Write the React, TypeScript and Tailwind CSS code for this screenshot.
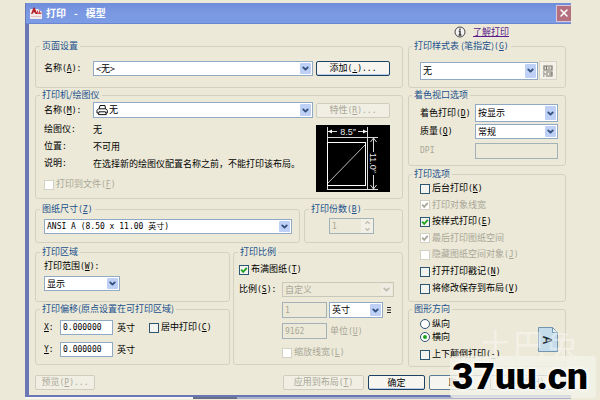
import React from "react";
import { ChevronDown, ChevronUp, X } from "lucide-react";

type Kids = { children?: React.ReactNode };

const MONO = "font-['DejaVu_Sans_Mono','Noto_Sans_CJK_SC',monospace] text-[8px]";

/** Caption followed by its keyboard mnemonic, e.g. 名称(A): */
function Cap({ t, k, end = "" }: { t: string; k?: string; end?: string }) {
  return (
    <>
      {t}
      {(k || end) && (
        <span className={MONO}>
          {k && (
            <>
              (<u>{k}</u>)
            </>
          )}
          {end}
        </span>
      )}
    </>
  );
}

const PADS = {
  normal: { box: "pl-2", legend: "-ml-1" },
  wide: { box: "pl-[11px]", legend: "-ml-2" },
  tight: { box: "pl-[5px]", legend: "-ml-px" },
};

function Group({ title, pad = "normal", className = "", children }: {
  title: React.ReactNode; pad?: keyof typeof PADS; className?: string;
} & Kids) {
  return (
    <fieldset className={`min-w-0 rounded-[3px] border border-[#d3d1c0] ${PADS[pad].box} ${className}`}>
      <legend className={`h-3 px-0.5 leading-3 text-[#21508c] ${PADS[pad].legend}`}>{title}</legend>
      {children}
    </fieldset>
  );
}

function Select({ id, value, label, disabled, className = "", icon }: {
  id: string; value: string; label?: string; disabled?: boolean; className?: string; icon?: React.ReactNode;
}) {
  return (
    <div className={`relative shrink-0 ${className}`}>
      <select
        id={id}
        aria-label={label}
        disabled={disabled}
        className={`block h-full w-full appearance-none border pr-3 leading-3 outline-none ${icon ? "pl-[15px]" : "pl-0.5"} ${
          disabled ? "border-[#c9c7ba] bg-[#ece9d8] text-[#a9a797] opacity-100" : "border-[#90a9c4] bg-white text-black"
        }`}
      >
        <option>{value}</option>
      </select>
      {icon}
      <span
        className={`pointer-events-none absolute inset-y-0.5 right-0.5 flex w-[11px] items-center justify-center rounded-[1px] ${
          disabled ? "bg-[#efede3] text-[#c0beb0]" : "bg-[#bfd0f6] text-[#34507e]"
        }`}
      >
        <ChevronDown size={9} strokeWidth={5} />
      </span>
    </div>
  );
}

function Check({ t, k, checked, disabled }: { t: string; k?: string; checked?: boolean; disabled?: boolean }) {
  return (
    <label className={`flex items-center gap-0.5 whitespace-nowrap ${disabled ? "text-[#a9a797]" : "text-black"}`}>
      <span className="relative size-2.5 shrink-0">
        <input
          type="checkbox"
          defaultChecked={checked}
          disabled={disabled}
          className={`block size-2.5 appearance-none border ${
            disabled ? "border-[#d3d1c3] bg-white" : "border-[#2d5673] bg-[#f3f4ef]"
          }`}
        />
        {checked && (
          <svg viewBox="0 0 10 10" className="pointer-events-none absolute inset-0" fill="none"
            stroke={disabled ? "#aaa899" : "#21a121"} strokeWidth="1.8">
            <path d="M2.2 4.6 4.2 6.8 7.8 2.8" />
          </svg>
        )}
      </span>
      <span><Cap t={t} k={k} /></span>
    </label>
  );
}

function Radio({ t, checked }: { t: string; checked?: boolean }) {
  return (
    <label className="flex h-[13px] items-center gap-0.5">
      <span className="relative size-2.5">
        <input type="radio" name="orientation" defaultChecked={checked}
          className="block size-2.5 appearance-none rounded-full border border-[#2d5673] bg-white" />
        {checked && <span className="pointer-events-none absolute inset-[3px] rounded-full bg-[#21a121]" />}
      </span>
      {t}
    </label>
  );
}

function TextBox({ id, value, label, disabled, className = "" }: {
  id: string; value: string; label?: string; disabled?: boolean; className?: string;
}) {
  return (
    <input
      id={id}
      aria-label={label}
      defaultValue={value}
      disabled={disabled}
      className={`block shrink-0 border pl-0.5 leading-3 outline-none ${MONO} ${
        disabled ? "border-[#a3b2b8] bg-[#ece9d8] text-[#a9a797]" : "border-[#90a9c4] bg-white text-black"
      } ${className}`}
    />
  );
}

function Button({ children, disabled, primary, className = "" }: { disabled?: boolean; primary?: boolean; className?: string } & Kids) {
  return (
    <button
      disabled={disabled}
      className={`h-[15px] shrink-0 whitespace-nowrap rounded-[2px] border text-center leading-3 ${
        disabled
          ? "border-[#cfcdbf] bg-[#f1efe4] text-[#a9a797]"
          : primary
            ? "border-[#1d4263] bg-[#f6f5f0] text-black shadow-[inset_0_-1px_0_#b9cbe6]"
            : "border-[#5b7a94] bg-[#f6f5f0] text-black"
      } ${className}`}
    >
      {children}
    </button>
  );
}

function PlotPreview() {
  return (
    <svg viewBox="0 0 74 67" className="mt-[7px] h-[67px] w-[74px] shrink-0 bg-black" fill="none" stroke="#d8d8d8">
      <rect x="11.5" y="12.5" width="40" height="52" />
      <rect x="11.5" y="17.5" width="38" height="43" stroke="#fff" />
      <path d="M12 58 49 20" stroke="#bbb" />
      <path d="M11.5 2v10M51.5 2v10M12 6.5h9M42 6.5h9" />
      <path d="M12 6.5 16 4.5v4zM51 6.5 47 4.5v4z" fill="#fff" stroke="none" />
      <path d="M52 12.5h10M52 64.5h10M57.5 13v14M57.5 50v14" />
      <path d="M54.5 17 57.5 13l3 4M54.5 60l3 4 3-4" />
      <text x="32" y="10" fontSize="9" textAnchor="middle" fill="#e8e8e8" stroke="none" fontFamily="Liberation Sans">8.5″</text>
      <text x="38" y="-54" fontSize="9" textAnchor="middle" fill="#e8e8e8" stroke="none" fontFamily="Liberation Sans" transform="rotate(90)">11.0″</text>
    </svg>
  );
}

function Info({ name, value }: { name: string; value: string }) {
  return (
    <div className="flex h-[17px] items-center whitespace-nowrap">
      <span className="w-[49px]"><Cap t={name} end=":" /></span>
      <span>{value}</span>
    </div>
  );
}

const printerIcon = (
  <svg viewBox="0 0 12 12" className="pointer-events-none absolute left-[3px] top-0.5 size-3" fill="#fff" stroke="#111" strokeWidth="1">
    <path d="M3 5 4 1.5h5L9.5 5" />
    <path d="M2.5 4.8h7.5l1.3 1.5V9H1V6.3z" />
    <path d="M3 7.8h6.5l.8 2.8H2.5z" />
  </svg>
);

export default function App() {
  return (
    <div className="relative min-h-screen overflow-hidden bg-[#ece9d8] pl-[25px] pr-[29px] pt-[3px] font-['Noto_Sans_CJK_SC',sans-serif] text-[9px] leading-3 text-black">
      <main className="border-b-2 border-l-[4px] border-[#6b77b4]">
        <header className="-ml-[3px] flex h-[21px] items-center border-b border-[#6b86cf] bg-gradient-to-b from-[#6f8dd9] via-[#7b99e3] to-[#7b9be6] pl-[3px]">
          <svg viewBox="0 0 12 12" className="ml-px size-3">
            <path d="M0 2h8l4 3v7H0z" fill="#f5e9e8" />
            <path d="M1 7 3.5.5h1L7.5 7H5.5L5 5.5H3L2.6 7z" fill="#b3202a" />
            <path d="M7 3.5h1v2h1v-2h1v2h1.5V7H7z" fill="#c8474e" />
            <path d="M1 9.5h10" stroke="#dfc5c5" />
          </svg>
          <h1 className="ml-1 flex flex-1 gap-2 text-[10px] font-bold text-white">
            <span>打印</span><span>-</span><span>模型</span>
          </h1>
          <button aria-label="关闭" className="flex h-[17px] w-[15px] items-center justify-center border border-r-0 border-[#d9c6d8] bg-[#b5707f] text-white">
            <X size={12} strokeWidth={3} />
          </button>
        </header>

        <div className="pb-[5px] pl-1.5 pr-[5px]">
          <div className="flex h-4 items-center justify-end gap-[7px] pr-[57px]">
            <svg viewBox="0 0 12 12" className="size-3" fill="none" stroke="#333">
              <circle cx="6" cy="6" r="5" fill="#f4f4f4" strokeWidth=".9" />
              <path d="M6 2.6v1.4M4.8 5.2H6V9M4.6 9h2.8" strokeWidth="1.4" />
            </svg>
            <a href="#help" className="text-[#5a1a8c] underline">了解打印</a>
          </div>

          <div className="flex gap-[5px]">
            <div className="min-w-0 flex-1">
              <Group title="页面设置" className="pb-[11px] pr-3 pt-[9px]">
                <div className="flex items-center">
                  <label htmlFor="page" className="w-[49px] shrink-0"><Cap t="名称" k="A" end=":" /></label>
                  <Select id="page" value="<无>" className="h-[15px] min-w-0 flex-1 shrink" />
                  <Button primary className="ml-[3px] w-[74px]">添加<span className={MONO}>(<u>.</u>)...</span></Button>
                </div>
              </Group>

              <Group title={<>打印机/绘图仪</>} className="mt-px pb-1.5 pr-3 pt-px">
                <div className="flex items-center">
                  <label htmlFor="printer" className="w-[49px] shrink-0"><Cap t="名称" k="M" end=":" /></label>
                  <Select id="printer" value="无" icon={printerIcon} className="h-4 min-w-0 flex-1 shrink" />
                  <Button disabled className="ml-[3px] w-[74px]"><Cap t="特性" k="R" end="..." /></Button>
                </div>
                <div className="flex justify-between">
                  <div className="pt-[3px]">
                    <Info name="绘图仪" value="无" />
                    <Info name="位置" value="不可用" />
                    <Info name="说明" value="在选择新的绘图仪配置名称之前，不能打印该布局。" />
                    <div className="pt-1.5"><Check t="打印到文件" k="F" disabled /></div>
                  </div>
                  <PlotPreview />
                </div>
              </Group>

              <div className="mt-1 flex gap-1">
                <Group title={<Cap t="图纸尺寸" k="Z" />} className="flex-1 pb-2 pr-[7px] pt-1">
                  <div className={MONO}>
                    <Select id="paper" label="图纸尺寸" value="ANSI A (8.50 x 11.00 英寸)" className="h-[15px]" />
                  </div>
                </Group>
                <Group title={<Cap t="打印份数" k="B" />} className="w-[99px] pb-2 pt-[3px]">
                  <div className="relative ml-4 w-[45px]">
                    <TextBox id="copies" label="打印份数" value="1" disabled className="h-4 w-full" />
                    <span className="pointer-events-none absolute inset-y-px right-px flex w-3 flex-col items-center justify-center bg-[#f1efe6] text-[#b9b7a8]">
                      <ChevronUp size={7} strokeWidth={4} />
                      <ChevronDown size={7} strokeWidth={4} />
                    </span>
                  </div>
                </Group>
              </div>

              <div className="mt-[3px] flex gap-[3px]">
                <div className="flex min-w-0 flex-1 flex-col gap-px">
                  <Group title="打印区域" className="pb-2.5 pt-0.5">
                    <label htmlFor="area" className="block h-4"><Cap t="打印范围" k="W" end=":" /></label>
                    <Select id="area" value="显示" className="h-[15px] w-[76px]" />
                  </Group>
                  <Group title="打印偏移(原点设置在可打印区域)" className="pb-[7px] pt-[5px]">
                    <div className="flex items-center">
                      <label htmlFor="ox" className={`w-4 ${MONO}`}><u>X</u>:</label>
                      <TextBox id="ox" value="0.000000" className="h-[15px] w-[53px]" />
                      <span className="ml-1 mr-[14px]">英寸</span>
                      <Check t="居中打印" k="C" />
                    </div>
                    <div className="mt-[7px] flex items-center">
                      <label htmlFor="oy" className={`w-4 ${MONO}`}><u>Y</u>:</label>
                      <TextBox id="oy" value="0.000000" className="h-[15px] w-[53px]" />
                      <span className="ml-1">英寸</span>
                    </div>
                  </Group>
                </div>

                <Group title="打印比例" pad="tight" className="w-[170px] pt-[5px]">
                  <Check t="布满图纸" k="T" checked />
                  <div className="mt-1.5 flex items-center">
                    <label htmlFor="scale" className="w-[43px]"><Cap t="比例" k="S" end=":" /></label>
                    <Select id="scale" value="自定义" disabled className="h-[15px] w-[112px]" />
                  </div>
                  <div className="ml-[43px] mt-[5px] flex items-center gap-0.5">
                    <TextBox id="paperUnits" label="图纸单位数" value="1" disabled className="h-4 w-[45px]" />
                    <Select id="unit" label="单位" value="英寸" className="h-4 w-[54px]" />
                    <svg viewBox="0 0 6 8" className="ml-px h-2 w-1.5" stroke="#222"><path d="M1 1.5h4M1 4h4M1 6.5h4" /></svg>
                  </div>
                  <div className="ml-[43px] mt-[5px] flex items-center gap-[3px] text-[#a9a797]">
                    <TextBox id="drawUnits" value="9162" disabled className="h-4 w-[45px]" />
                    <label htmlFor="drawUnits"><Cap t="单位" k="U" /></label>
                  </div>
                  <div className="ml-[43px] mt-[7px]"><Check t="缩放线宽" k="L" disabled /></div>
                </Group>
              </div>
            </div>

            <div className="w-[158px] shrink-0">
              <Group title={<Cap t="打印样式表 (笔指定)" k="G" />} pad="wide" className="pb-[7px] pr-2 pt-[9px]">
                <div className="flex items-center gap-px">
                  <Select id="style" label="打印样式表" value="无" className="h-[18px] min-w-0 flex-1 shrink" />
                  <button aria-label="编辑" className="flex h-[19px] w-[18px] items-center justify-center border border-[#d6d4c6] bg-[#f3f1e8]">
                    <svg viewBox="0 0 10 12" className="h-3 w-2.5" fill="none" stroke="#77756a" strokeWidth="1.2">
                      <path d="M1 1h8v4H1zM3.5 1v4M5 3h2.5M3 7h6v4H3M0 7h1.5M0 9h5M0 11h1.5M6 9h3" />
                    </svg>
                  </button>
                </div>
              </Group>

              <Group title="着色视口选项" pad="wide" className="mt-px pb-1.5 pr-[7px] pt-[3px]">
                <div className="flex items-center justify-between">
                  <label htmlFor="shade"><Cap t="着色打印" k="D" /></label>
                  <Select id="shade" value="按显示" className="h-[18px] w-[83px]" />
                </div>
                <div className="mt-0.5 flex items-center justify-between">
                  <label htmlFor="quality"><Cap t="质量" k="Q" /></label>
                  <Select id="quality" value="常规" className="h-[15px] w-[83px]" />
                </div>
                <div className="mt-1 flex items-center justify-between">
                  <label htmlFor="dpi" className={`text-[#a9a797] ${MONO}`}>DPI</label>
                  <TextBox id="dpi" value="" disabled className="h-4 w-[83px]" />
                </div>
              </Group>

              <Group title="打印选项" pad="wide" className="mt-0.5 pb-1">
                <div className="flex h-[117px] flex-col justify-around">
                  <Check t="后台打印" k="K" />
                  <Check t="打印对象线宽" checked disabled />
                  <Check t="按样式打印" k="E" checked />
                  <Check t="最后打印图纸空间" checked disabled />
                  <Check t="隐藏图纸空间对象" k="J" disabled />
                  <Check t="打开打印戳记" k="N" />
                  <Check t="将修改保存到布局" k="V" />
                </div>
              </Group>

              <Group title="图形方向" pad="wide" className="mt-px pb-1 pr-[7px] pt-0.5">
                <div className="flex items-center justify-between">
                  <div>
                    <Radio t="纵向" />
                    <Radio t="横向" checked />
                    <div className="pb-px pt-[5px]"><Check t="上下颠倒打印" k="-" /></div>
                  </div>
                  <svg viewBox="0 0 20 25" className="h-[25px] w-5">
                    <path d="M.5.5h14l5 5v19H.5z" fill="#c5dcea" stroke="#7395ad" />
                    <path d="M14.5.5v5h5z" fill="#eef6fb" stroke="#7395ad" />
                    <text x="13" y="-5" fontSize="12" fontWeight="bold" textAnchor="middle" fill="#1c2a33" fontFamily="Liberation Sans" transform="rotate(90)">A</text>
                  </svg>
                </div>
              </Group>
            </div>
          </div>

          <footer className="mt-2 flex">
            <Button disabled className="w-[60px]"><Cap t="预览" k="P" end="..." /></Button>
            <span className="flex-1" />
            <Button disabled className="mr-1 w-[81px]"><Cap t="应用到布局" k="T" /></Button>
            <Button primary className="mr-1 w-[57px]">确定</Button>
            <Button className="mr-1 w-[57px]">取消</Button>
            <Button className="w-[76px]"><Cap t="帮助" k="H" /></Button>
          </footer>
        </div>
      </main>
      <div className="flex h-0.5">
        <span className="w-[168px] bg-[#f4f4f4]" />
        <span className="w-11 bg-[#696f88]" />
        <span className="flex-1 bg-[#aeb1cc]" />
      </div>

      <div className="pointer-events-none absolute bottom-10 right-[22px] text-[33px] leading-8 text-white/40">土巴兔</div>
      <div className="pointer-events-none absolute bottom-0.5 right-1 h-[42px] w-[146px] rounded-sm bg-[#f4f2e8]/80 pl-0.5 font-['Roboto',sans-serif] text-[37px] font-black leading-[42px] text-black [text-shadow:0_0_2px_white,0_0_4px_white,0_0_4px_white]">
        37uu.cn
      </div>
    </div>
  );
}
